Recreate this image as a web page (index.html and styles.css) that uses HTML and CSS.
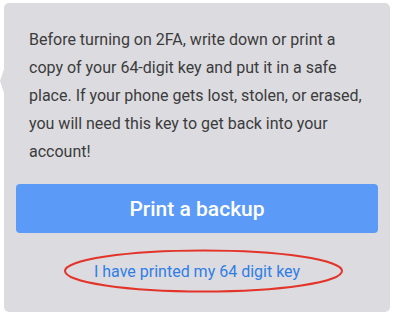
FILE: index.html
```html
<!DOCTYPE html>
<html>
<head>
<meta charset="utf-8">
<link rel="stylesheet" href="styles.css">
</head>
<body>
<div class="card">
  <p class="intro">Before turning on 2FA, write down or print a copy of your 64-digit key and put it in a safe place. If your phone gets lost, stolen, or erased, you will need this key to get back into your account!</p>
  <button class="print">Print a backup</button>
  <div class="link-row">
    <a class="done" href="#">I have printed my 64 digit key</a>
    <svg class="circle" width="281" height="46" viewBox="0 0 281 46"><ellipse cx="140.5" cy="23" rx="138.5" ry="20.5" fill="none" stroke="#e3342a" stroke-width="2"/></svg>
  </div>
</div>
</body>
</html>
```
FILE: styles.css
```css
html, body {
  margin: 0;
  padding: 0;
  background: #fff;
}
body {
  font-family: Roboto, "Noto Sans", sans-serif;
}
.card {
  position: relative;
  margin: 3px 4px 0 4px;
  width: 386px;
  height: 309px;
  box-sizing: border-box;
  background: #dcdbdf;
  border-radius: 5px;
  padding: 23px 12px 0 12px;
}
.card::before {
  content: "";
  position: absolute;
  left: -4px;
  top: 66px;
  border-top: 12px solid transparent;
  border-bottom: 12px solid transparent;
  border-right: 4px solid #dcdbdf;
}
.intro {
  margin: 0;
  padding: 0 13px;
  font-size: 16px;
  line-height: 28px;
  color: #3b3b3d;
}
.print {
  display: block;
  width: 100%;
  height: 49px;
  margin-top: 18px;
  border: none;
  border-radius: 4px;
  background: #5b9bf7;
  color: #fff;
  font-family: Roboto, "Noto Sans", sans-serif;
  font-size: 21px;
  font-weight: 500;
}
.link-row {
  position: relative;
  display: flex;
  justify-content: center;
  margin-top: 26px;
  height: 24px;
  align-items: center;
}
.done {
  font-size: 16px;
  color: #2f7ee6;
  text-decoration: none;
}
.circle {
  position: absolute;
  left: 47px;
  top: -11px;
}
```
